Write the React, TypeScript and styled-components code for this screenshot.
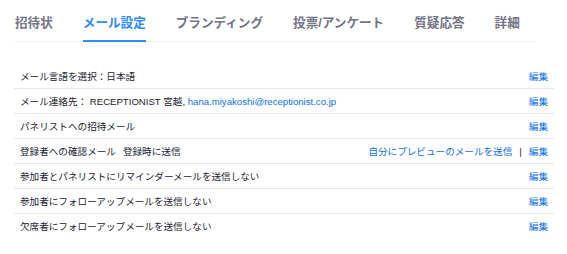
import React from "react";
import styled, { createGlobalStyle } from "styled-components";

const colors = {
  text: "#232333",
  muted: "#747487",
  active: "#2d8cff",
  link: "#0e71eb",
  line: "#e8e8ec",
  faint: "#f3f3f6",
};

const GlobalStyle = createGlobalStyle`
  body {
    margin: 0;
    background: #fff;
    font-family: "Liberation Sans", "Noto Sans CJK JP", sans-serif;
    color: ${colors.text};
  }
`;

const Page = styled.div`
  padding-left: 14px;
  width: 540px;
`;

const TabBar = styled.nav`
  display: flex;
  gap: 30px;
  width: 521px;
  padding-left: 1px;
  border-bottom: 1px solid ${colors.faint};
`;

const Tab = styled.a<{ $active?: boolean }>`
  font-size: 12.6px;
  font-weight: 700;
  line-height: 20px;
  padding: 13px 0 7px;
  margin-bottom: -1px;
  color: ${({ $active }) => ($active ? colors.active : colors.muted)};
  border-bottom: 2px solid
    ${({ $active }) => ($active ? colors.active : "transparent")};
  cursor: pointer;
`;

const List = styled.ul`
  list-style: none;
  margin: 22px 0 0;
  padding: 0;
`;

const Row = styled.li`
  display: flex;
  align-items: center;
  justify-content: space-between;
  height: 24px;
  padding: 0 6px;
  font-size: 9.6px;
  border-bottom: 1px solid ${colors.line};

  &:last-child {
    border-bottom: none;
  }
`;

const Label = styled.span`
  white-space: nowrap;
`;

const Extra = styled.span`
  margin-left: 7px;
`;

const Link = styled.a`
  color: ${colors.link};
  cursor: pointer;
`;

const Actions = styled.span`
  display: flex;
  align-items: center;
  gap: 7px;
`;

const Divider = styled.span`
  color: ${colors.text};
`;

const tabs = ["招待状", "メール設定", "ブランディング", "投票/アンケート", "質疑応答", "詳細"];

export default function App() {
  return (
    <Page>
      <GlobalStyle />
      <TabBar>
        {tabs.map((t) => (
          <Tab key={t} $active={t === "メール設定"}>
            {t}
          </Tab>
        ))}
      </TabBar>
      <List>
        <Row>
          <Label>メール言語を選択：日本語</Label>
          <Link>編集</Link>
        </Row>
        <Row>
          <Label>
            メール連絡先： RECEPTIONIST 宮越,{" "}
            <Link>hana.miyakoshi@receptionist.co.jp</Link>
          </Label>
          <Link>編集</Link>
        </Row>
        <Row>
          <Label>パネリストへの招待メール</Label>
          <Link>編集</Link>
        </Row>
        <Row>
          <Label>
            登録者への確認メール<Extra>登録時に送信</Extra>
          </Label>
          <Actions>
            <Link>自分にプレビューのメールを送信</Link>
            <Divider>|</Divider>
            <Link>編集</Link>
          </Actions>
        </Row>
        <Row>
          <Label>参加者とパネリストにリマインダーメールを送信しない</Label>
          <Link>編集</Link>
        </Row>
        <Row>
          <Label>参加者にフォローアップメールを送信しない</Label>
          <Link>編集</Link>
        </Row>
        <Row>
          <Label>欠席者にフォローアップメールを送信しない</Label>
          <Link>編集</Link>
        </Row>
      </List>
    </Page>
  );
}
